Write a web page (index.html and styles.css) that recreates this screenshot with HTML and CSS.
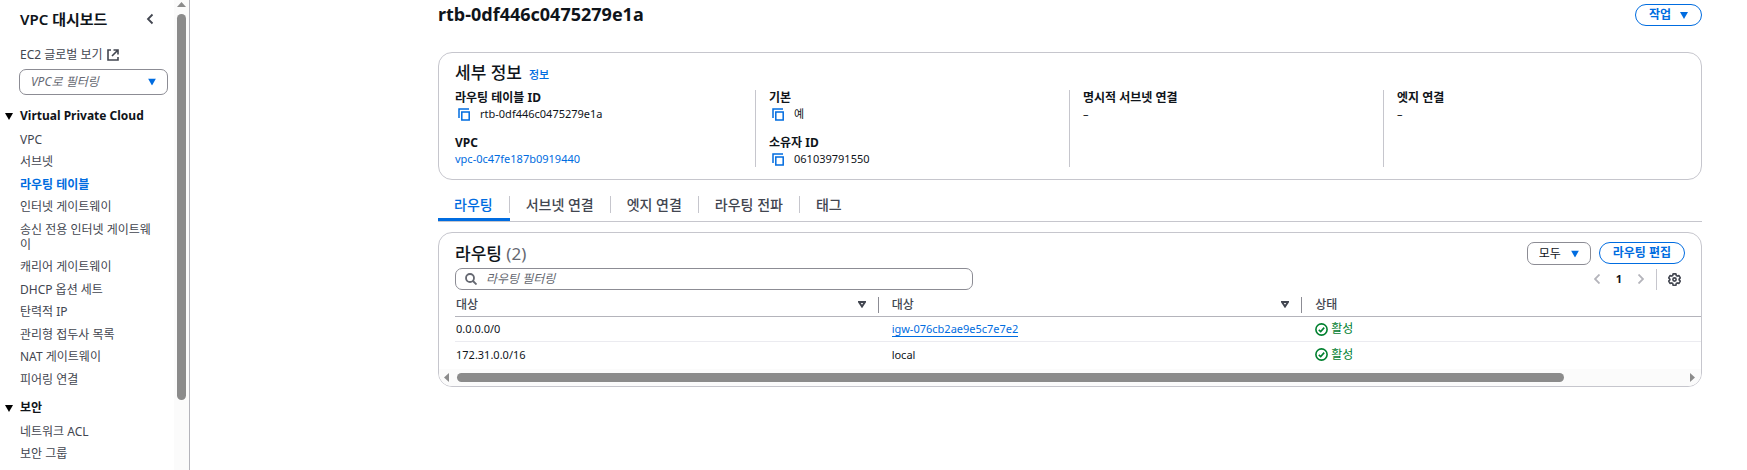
FILE: index.html
```html
<!DOCTYPE html>
<html lang="ko">
<head>
<meta charset="UTF-8">
<meta name="viewport" content="width=device-width, initial-scale=1.0">
<title>VPC 라우팅 테이블</title>
<link rel="stylesheet" href="styles.css">
</head>
<body>

<aside class="sidebar">
    <div class="sidebar-content">
        <div class="sidebar-header">
            <h2>VPC 대시보드</h2>
            <button class="icon-button" aria-label="탐색 닫기">
                <svg width="8" height="12" viewBox="0 0 8 12"><path d="M6.500 1.500 2 6l4.500 4.500" fill="none" stroke="#424650" stroke-width="1.800"/></svg>
            </button>
        </div>

        <a class="global-view" href="#">EC2 글로벌 보기
            <svg width="12" height="12" viewBox="0 0 12 12" fill="none" stroke="#424650" stroke-width="1.600"><path d="M4 1H1v10h10V8M6.500 1H11v4.500M11 1 5 7"/></svg>
        </a>

        <div class="select-box vpc-filter">
            <select aria-label="VPC로 필터링">
                <option>VPC로 필터링</option>
            </select>
            <svg class="caret" width="8" height="7" viewBox="0 0 8 7"><path d="M0 0h8L4 7z"/></svg>
        </div>

        <h3 class="section-title">
            <svg width="8" height="7" viewBox="0 0 8 7"><path d="M0 0h8L4 7z"/></svg>
            Virtual Private Cloud
        </h3>
        <ul class="nav-list">
            <li><a href="#">VPC</a></li>
            <li><a href="#">서브넷</a></li>
            <li><a href="#" class="active">라우팅 테이블</a></li>
            <li><a href="#">인터넷 게이트웨이</a></li>
            <li><a href="#">송신 전용 인터넷 게이트웨이</a></li>
            <li><a href="#">캐리어 게이트웨이</a></li>
            <li><a href="#">DHCP 옵션 세트</a></li>
            <li><a href="#">탄력적 IP</a></li>
            <li><a href="#">관리형 접두사 목록</a></li>
            <li><a href="#">NAT 게이트웨이</a></li>
            <li><a href="#">피어링 연결</a></li>
        </ul>

        <h3 class="section-title">
            <svg width="8" height="7" viewBox="0 0 8 7"><path d="M0 0h8L4 7z"/></svg>
            보안
        </h3>
        <ul class="nav-list">
            <li><a href="#">네트워크 ACL</a></li>
            <li><a href="#">보안 그룹</a></li>
        </ul>
    </div>
    <div class="scroll-y">
        <svg width="9" height="5" viewBox="0 0 9 5"><path d="M0 5h9L4.500 0z"/></svg>
        <div class="thumb"></div>
    </div>
</aside>

<main class="main">
    <div class="page-header">
        <h1>rtb-0df446c0475279e1a</h1>
        <button class="button">작업
            <svg class="caret" width="8" height="7" viewBox="0 0 8 7"><path d="M0 0h8L4 7z"/></svg>
        </button>
    </div>

    <section class="card details">
        <div class="details-header">
            <h2>세부 정보</h2>
            <a href="#">정보</a>
        </div>
        <div class="details-grid">
            <dl>
                <dt>라우팅 테이블 ID</dt>
                <dd>
                    <svg class="copy" width="12" height="13" viewBox="0 0 12 13"><path d="M1 10V1h10M3.800 4h7.400v8H3.800z"/></svg>
                    rtb-0df446c0475279e1a
                </dd>
                <dt>VPC</dt>
                <dd><a href="#">vpc-0c47fe187b0919440</a></dd>
            </dl>
            <dl>
                <dt>기본</dt>
                <dd>
                    <svg class="copy" width="12" height="13" viewBox="0 0 12 13"><path d="M1 10V1h10M3.800 4h7.400v8H3.800z"/></svg>
                    예
                </dd>
                <dt>소유자 ID</dt>
                <dd>
                    <svg class="copy" width="12" height="13" viewBox="0 0 12 13"><path d="M1 10V1h10M3.800 4h7.400v8H3.800z"/></svg>
                    061039791550
                </dd>
            </dl>
            <dl>
                <dt>명시적 서브넷 연결</dt>
                <dd>–</dd>
            </dl>
            <dl>
                <dt>엣지 연결</dt>
                <dd>–</dd>
            </dl>
        </div>
    </section>

    <div class="tabs" role="tablist">
        <button class="tab active" role="tab" aria-selected="true"><span>라우팅</span></button>
        <button class="tab" role="tab"><span>서브넷 연결</span></button>
        <button class="tab" role="tab"><span>엣지 연결</span></button>
        <button class="tab" role="tab"><span>라우팅 전파</span></button>
        <button class="tab" role="tab"><span>태그</span></button>
    </div>

    <section class="card routes">
        <div class="routes-header">
            <h2>라우팅 <span class="count">(2)</span></h2>
            <div class="actions">
                <div class="select-box">
                    <select aria-label="라우팅 유형">
                        <option>모두</option>
                    </select>
                    <svg class="caret" width="8" height="7" viewBox="0 0 8 7"><path d="M0 0h8L4 7z"/></svg>
                </div>
                <button class="button">라우팅 편집</button>
            </div>
        </div>

        <div class="routes-tools">
            <label class="search">
                <svg width="12" height="12" viewBox="0 0 12 12" fill="none" stroke="#656871" stroke-width="1.800"><circle cx="5" cy="5" r="4"/><path d="m8 8 3.500 3.500"/></svg>
                <input type="text" placeholder="라우팅 필터링" aria-label="라우팅 필터링">
            </label>
            <div class="pagination">
                <button class="icon-button" aria-label="이전 페이지">
                    <svg width="6" height="10" viewBox="0 0 6 10"><path d="M5.500.5 1 5l4.500 4.500" fill="none" stroke="#b4b4bb" stroke-width="1.800"/></svg>
                </button>
                <button class="icon-button page">1</button>
                <button class="icon-button" aria-label="다음 페이지">
                    <svg width="6" height="10" viewBox="0 0 6 10"><path d="M.5.5 5 5 .5 9.500" fill="none" stroke="#b4b4bb" stroke-width="1.800"/></svg>
                </button>
                <button class="icon-button settings" aria-label="기본 설정">
                    <svg width="13" height="13" viewBox="0 0 16 16" fill="none" stroke="#424650" stroke-width="2" stroke-linejoin="round"><path d="M6.300 1h3.400l.5 2 1.300.8 2-.6 1.600 2.900L13.700 7.500v1l1.400 1.400-1.600 2.900-2-.6-1.300.8-.5 2H6.300l-.5-2-1.300-.8-2 .6L.9 9.900l1.400-1.400v-1L.9 6.100l1.600-2.900 2 .6L5.800 3z"/><circle cx="8" cy="8" r="2"/></svg>
                </button>
            </div>
        </div>

        <table class="routes-table">
            <thead>
                <tr>
                    <th><div class="th">대상 <svg width="8" height="7" viewBox="0 0 8 7"><path d="M1 1h6L4 5.500z"/></svg></div></th>
                    <th><div class="th">대상 <svg width="8" height="7" viewBox="0 0 8 7"><path d="M1 1h6L4 5.500z"/></svg></div></th>
                    <th><div class="th">상태</div></th>
                </tr>
            </thead>
            <tbody>
                <tr>
                    <td>0.0.0.0/0</td>
                    <td><a href="#">igw-076cb2ae9e5c7e7e2</a></td>
                    <td>
                        <span class="status">
                            <svg width="13" height="13" viewBox="0 0 13 13"><circle cx="6.500" cy="6.500" r="5.600"/><path d="m3.800 6.800 1.900 1.800 3.500-4"/></svg>활성
                        </span>
                    </td>
                </tr>
                <tr>
                    <td>172.31.0.0/16</td>
                    <td>local</td>
                    <td>
                        <span class="status">
                            <svg width="13" height="13" viewBox="0 0 13 13"><circle cx="6.500" cy="6.500" r="5.600"/><path d="m3.800 6.800 1.900 1.800 3.500-4"/></svg>활성
                        </span>
                    </td>
                </tr>
            </tbody>
        </table>

        <div class="scroll-x">
            <svg width="5" height="9" viewBox="0 0 5 9"><path d="M5 0v9L0 4.500z"/></svg>
            <div class="track"><div class="thumb"></div></div>
            <svg width="5" height="9" viewBox="0 0 5 9"><path d="M0 0v9l5-4.500z"/></svg>
        </div>
    </section>
</main>

</body>
</html>
```
FILE: styles.css
```css
* {
    box-sizing: border-box;
}

body {
    display: flex;
    height: 100vh;
    margin: 0;
    overflow: hidden;
    font-family: "Noto Sans", "Noto Sans CJK KR", sans-serif;
    font-size: 12px;
    line-height: 16px;
    color: #0f141a;
    background-color: #fff;
}

h1, h2, h3, ul, dl, dd {
    margin: 0;
    padding: 0;
}

a {
    color: #006ce0;
    text-decoration: none;
}

button, input, select {
    font: inherit;
    color: inherit;
}

button {
    cursor: pointer;
}

svg {
    flex-shrink: 0;
}

/* sidebar */
.sidebar {
    display: flex;
    flex-shrink: 0;
    width: 190px;
    border-right: 1px solid #b4b4bb;
}

.sidebar-content {
    flex: 1;
    padding: 9px 6px 0 5px;
}

.sidebar-header {
    display: flex;
    align-items: center;
    justify-content: space-between;
    padding: 0 14px 0 15px;
}

.sidebar-header h2 {
    font-size: 15px;
    font-weight: 600;
    line-height: 20px;
}

.icon-button {
    display: flex;
    align-items: center;
    justify-content: center;
    padding: 0;
    border: 0;
    background: none;
}

.global-view {
    display: flex;
    align-items: center;
    gap: 4px;
    margin: 18px 0 6px 15px;
    color: #424650;
}

.select-box {
    position: relative;
}

.select-box select {
    display: block;
    width: 100%;
    height: 23px;
    padding: 0 28px 0 11px;
    border: 1px solid #8c8c94;
    border-radius: 7px;
    background-color: #fff;
    appearance: none;
}

.select-box .caret {
    position: absolute;
    top: 50%;
    right: 12px;
    transform: translateY(-50%);
    pointer-events: none;
}

.caret {
    fill: #006ce0;
}

.vpc-filter {
    margin: 0 0 11px 14px;
}

.vpc-filter select {
    height: 26px;
    font-style: italic;
    color: #656871;
}

.section-title {
    display: flex;
    align-items: center;
    gap: 7px;
    margin: 8px 0 2px;
    font-size: 12px;
    line-height: 20px;
    white-space: nowrap;
}

.nav-list {
    padding: 0 12px 0 15px;
    list-style: none;
    line-height: 15px;
}

.nav-list li {
    padding: 4px 0 3px;
}

.nav-list li:nth-child(even) {
    padding-bottom: 4px;
}

.nav-list a {
    display: block;
    color: #424650;
    word-break: break-all;
}

.nav-list .active {
    font-weight: bold;
    color: #006ce0;
}

.scroll-y {
    display: flex;
    flex-direction: column;
    align-items: center;
    gap: 7px;
    width: 15px;
    padding-top: 2px;
    background-color: #fbfbfb;
}

.scroll-y svg, .scroll-x svg {
    fill: #8b8b8b;
}

.scroll-y .thumb {
    width: 9px;
    height: 82.5%;
    border-radius: 5px;
    background-color: #8b8b8b;
}

/* main */
.main {
    flex: 1;
    min-width: 0;
    padding: 4px 45px 0 248px;
}

.page-header {
    display: flex;
    align-items: center;
    justify-content: space-between;
    height: 22px;
}

.page-header h1 {
    font-size: 18px;
    line-height: 20px;
    padding-bottom: 2px;
}

.button {
    display: flex;
    align-items: center;
    gap: 9px;
    height: 22px;
    padding: 0 13px;
    border: 1px solid #006ce0;
    border-radius: 11px;
    background-color: #fff;
    font-weight: bold;
    color: #006ce0;
}

.card {
    border: 1px solid #c6c6cd;
    border-radius: 14px;
    background-color: #fff;
}

.card h2 {
    font-size: 17px;
    font-weight: 500;
    line-height: 22px;
}

.details {
    margin-top: 26px;
    padding: 9px 16px 12px;
}

.details-header {
    display: flex;
    align-items: baseline;
    gap: 7px;
    margin-bottom: 6px;
}

.details-header a {
    font-size: 11px;
    font-weight: 500;
}

.details-grid {
    display: grid;
    grid-template-columns: repeat(4, 1fr);
    gap: 12px;
    margin-left: -14px;
}

.details-grid dl {
    padding-left: 13px;
    border-left: 1px solid #c6c6cd;
}

.details-grid dl:first-child {
    border-left-color: transparent;
}

.details-grid dt {
    font-weight: bold;
}

.details-grid dd {
    display: flex;
    align-items: center;
    gap: 10px;
    font-size: 11px;
}

.details-grid dd + dt {
    margin-top: 13px;
}

.copy {
    margin-left: 3px;
    fill: none;
    stroke: #006ce0;
    stroke-width: 1.5;
}

/* tabs */
.tabs {
    display: flex;
    margin-top: 8px;
    border-bottom: 1px solid #c6c6cd;
}

.tab {
    padding: 8px 0;
    border: 0;
    background: none;
    font-size: 14px;
    font-weight: 500;
    line-height: 17px;
    color: #424650;
}

.tab span {
    display: block;
    padding: 0 16px;
    border-right: 1px solid #c6c6cd;
}

.tab:last-child span {
    border-right: 0;
}

.tab.active {
    padding-bottom: 5px;
    border-bottom: 3px solid #006ce0;
    color: #006ce0;
}

/* routes */
.routes {
    margin-top: 10px;
    overflow: hidden;
}

.routes-header {
    display: flex;
    align-items: center;
    justify-content: space-between;
    padding: 9px 16px 3px;
}

.count {
    font-weight: normal;
    color: #656871;
}

.actions {
    display: flex;
    gap: 8px;
}

.routes-tools {
    display: flex;
    justify-content: space-between;
    padding: 0 16px;
}

.search {
    display: flex;
    align-items: center;
    gap: 9px;
    width: 518px;
    height: 22px;
    padding: 0 9px;
    border: 1px solid #8c8c94;
    border-radius: 7px;
}

.search input {
    flex: 1;
    padding: 0;
    border: 0;
    outline: 0;
}

.search input::placeholder {
    font-style: italic;
    color: #656871;
}

.pagination {
    display: flex;
    align-items: center;
    gap: 16px;
}

.page {
    font-size: 11px;
    font-weight: bold;
}

.settings {
    height: 21px;
    margin-left: -4px;
    padding: 0 4px 0 11px;
    border-left: 1px solid #c6c6cd;
}

.routes-table {
    width: calc(100% - 16px);
    margin-left: 16px;
    border-collapse: separate;
    border-spacing: 0;
    table-layout: fixed;
}

.routes-table th, .routes-table td {
    height: 25px;
    padding: 0 0 0 13px;
    border-bottom: 1px solid #ebebf0;
    text-align: left;
}

.routes-table td {
    font-size: 11px;
}

.routes-table th {
    width: 34%;
    height: 27px;
    padding-top: 3px;
    border-bottom-color: #b4b4bb;
    font-weight: 500;
    color: #424650;
}

.routes-table th:last-child {
    width: 32%;
}

.routes-table th:first-child, .routes-table td:first-child {
    padding-left: 1px;
}

.routes-table tbody tr:last-child td {
    border-bottom: 0;
}

.th {
    display: flex;
    align-items: center;
    justify-content: space-between;
    padding-right: 12px;
    border-right: 1px solid #8c8c94;
}

.th svg {
    fill: none;
    stroke: #424650;
    stroke-width: 2;
}

th:last-child .th {
    border-right: 0;
}

.routes-table a {
    border-bottom: 1px solid #006ce0;
}

.status {
    display: flex;
    align-items: center;
    gap: 3px;
    font-size: 12px;
    color: #00802f;
}

.status svg {
    fill: none;
    stroke: #00802f;
    stroke-width: 1.6;
}

.scroll-x {
    display: flex;
    align-items: center;
    gap: 8px;
    height: 17px;
    margin-top: 2px;
    padding: 0 6px 0 5px;
    background-color: #fbfbfb;
}

.scroll-x .track {
    flex: 1;
}

.scroll-x .thumb {
    width: 90.4%;
    height: 9px;
    border-radius: 5px;
    background-color: #8b8b8b;
}
```
